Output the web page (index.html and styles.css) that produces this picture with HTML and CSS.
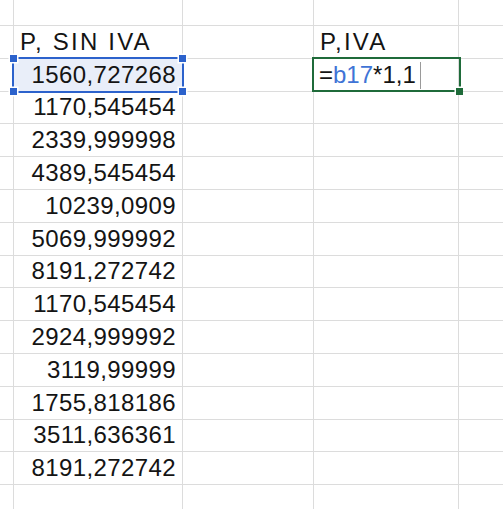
FILE: index.html
```html
<!DOCTYPE html>
<html lang="es">
<head>
<meta charset="utf-8">
<title>Hoja</title>
<link rel="stylesheet" href="styles.css">
</head>
<body>
<div class="sheet">
  <div class="c"></div><div class="c"></div><div class="c"></div><div class="c"></div><div class="c"></div>

  <div class="c"></div><div class="c head">P, SIN IVA</div><div class="c"></div><div class="c head">P,IVA</div><div class="c"></div>

  <div class="c"></div>
  <div class="c num selected">1560,727268
    <span class="sel-box"></span>
    <span class="knob tl"></span><span class="knob tr"></span><span class="knob bl"></span><span class="knob br"></span>
  </div>
  <div class="c"></div>
  <div class="c edit"><span class="op">=</span><span class="ref">b17</span><span class="op">*1,1</span><span class="caret"></span>
    <span class="edit-box"></span><span class="fill-handle"></span>
  </div>
  <div class="c"></div>

  <div class="c"></div><div class="c num">1170,545454</div><div class="c"></div><div class="c"></div><div class="c"></div>
  <div class="c"></div><div class="c num">2339,999998</div><div class="c"></div><div class="c"></div><div class="c"></div>
  <div class="c"></div><div class="c num">4389,545454</div><div class="c"></div><div class="c"></div><div class="c"></div>
  <div class="c"></div><div class="c num">10239,0909</div><div class="c"></div><div class="c"></div><div class="c"></div>
  <div class="c"></div><div class="c num">5069,999992</div><div class="c"></div><div class="c"></div><div class="c"></div>
  <div class="c"></div><div class="c num">8191,272742</div><div class="c"></div><div class="c"></div><div class="c"></div>
  <div class="c"></div><div class="c num">1170,545454</div><div class="c"></div><div class="c"></div><div class="c"></div>
  <div class="c"></div><div class="c num">2924,999992</div><div class="c"></div><div class="c"></div><div class="c"></div>
  <div class="c"></div><div class="c num">3119,99999</div><div class="c"></div><div class="c"></div><div class="c"></div>
  <div class="c"></div><div class="c num">1755,818186</div><div class="c"></div><div class="c"></div><div class="c"></div>
  <div class="c"></div><div class="c num">3511,636361</div><div class="c"></div><div class="c"></div><div class="c"></div>
  <div class="c"></div><div class="c num">8191,272742</div><div class="c"></div><div class="c"></div><div class="c"></div>

  <div class="c"></div><div class="c"></div><div class="c"></div><div class="c"></div><div class="c"></div>
</div>
</body>
</html>
```

FILE: styles.css
```css
html, body {
  margin: 0;
  padding: 0;
  background: #ffffff;
  overflow: hidden;
}

.sheet {
  display: grid;
  grid-template-columns: 13px 168px 130px 144px 1fr;
  grid-template-rows: 25px repeat(14, 31.8px) 1fr;
  gap: 1px;
  width: 503px;
  height: 509px;
  background: #dcdcdc;
  font-family: "Liberation Sans", Arial, sans-serif;
  font-size: 24px;
  line-height: 24px;
  color: #141414;
}

.c {
  background: #ffffff;
  position: relative;
  display: flex;
  align-items: flex-end;
  padding-bottom: 4px;
  box-sizing: border-box;
  white-space: nowrap;
  min-width: 0;
}

.head {
  padding-left: 6px;
  letter-spacing: 2.2px;
}

.num {
  justify-content: flex-end;
  padding-right: 6px;
  letter-spacing: 0.4px;
}

.selected {
  background: #e9eef9;
  z-index: 2;
}

.sel-box {
  position: absolute;
  top: -2px;
  left: -2px;
  right: -2px;
  bottom: -2px;
  border: 2px solid #2c62cc;
  pointer-events: none;
}

.knob {
  position: absolute;
  width: 7px;
  height: 7px;
  background: #2c62cc;
  box-shadow: 0 0 0 1.5px #ffffff;
}
.knob.tl { top: -4px; left: -4px; }
.knob.tr { top: -4px; right: -4px; }
.knob.bl { bottom: -4px; left: -4px; }
.knob.br { bottom: -4px; right: -4px; }

.edit {
  padding-left: 5px;
  z-index: 2;
}

.op { color: #141414; }
.ref { color: #3f74d6; }

.caret {
  display: inline-block;
  width: 1px;
  height: 27px;
  background: #9a9a9a;
  margin-left: 4px;
  margin-bottom: -2px;
  align-self: flex-end;
}

.edit-box {
  position: absolute;
  top: -2px;
  left: -2px;
  right: -3px;
  bottom: -1px;
  border: 2px solid #1f6b3a;
  pointer-events: none;
}

.fill-handle {
  position: absolute;
  width: 7px;
  height: 7px;
  right: -5px;
  bottom: -4px;
  background: #1f6b3a;
  box-shadow: -1.5px -1.5px 0 0 #ffffff;
}
```
